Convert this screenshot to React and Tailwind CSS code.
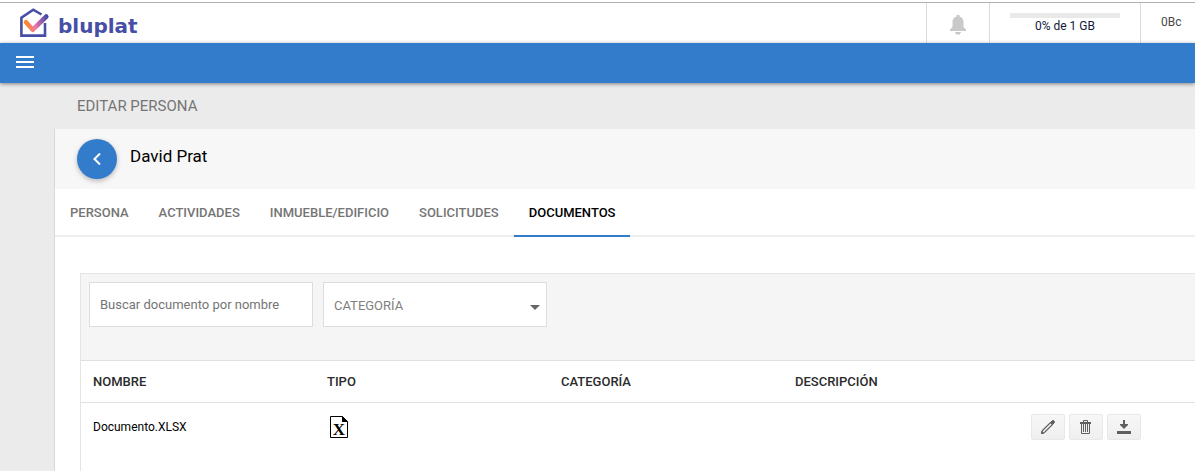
import { useState } from "react"

const TABS = ["PERSONA", "ACTIVIDADES", "INMUEBLE/EDIFICIO", "SOLICITUDES", "DOCUMENTOS"]
const COLUMNS = ["NOMBRE", "TIPO", "CATEGORÍA", "DESCRIPCIÓN"]
const DOCUMENTS = [{ name: "Documento.XLSX", category: "", description: "" }]

function Logo() {
  return (
    <a href="#" className="flex items-center gap-2 pl-5 text-[#464fa5]">
      <svg width="30" height="30" viewBox="0 0 30 30" fill="none" aria-hidden="true">
        <defs>
          <linearGradient id="check" gradientUnits="userSpaceOnUse" x1="5" y1="13" x2="27" y2="9">
            <stop offset="0" stopColor="#ff8a1f" />
            <stop offset="0.4" stopColor="#f07aa5" />
            <stop offset="0.7" stopColor="#a05cad" />
            <stop offset="1" stopColor="#3f4ca3" />
          </linearGradient>
        </defs>
        <path d="M21.500 6.500L13.300 1.700L1.400 9.800V27.600H25V15" stroke="#464fa5" strokeWidth="2.600" />
        <path d="M6 14.300L12.800 21.700L26.300 8.500" stroke="url(#check)" strokeWidth="4.600" strokeLinecap="round" strokeLinejoin="round" />
      </svg>
      <span className="pt-1.5 font-['DejaVu_Sans',sans-serif] text-[20px] leading-6 font-bold">bluplat</span>
    </a>
  )
}

function BellIcon() {
  return (
    <svg width="18" height="20" viewBox="0 0 18 20" fill="#c9c9c9" aria-hidden="true">
      <path d="M7.500 0h3v1.500c2.500.8 4 2.700 4 5.200v5.300l2.500 2.500V16H1v-1.500l2.500-2.500V6.700c0-2.500 1.500-4.400 4-5.200zM6 17h6v1h-1v1.500H7V18H6z" />
    </svg>
  )
}

function ExcelIcon() {
  return (
    <svg width="20" height="22" viewBox="0 0 20 22" role="img" aria-label="Excel">
      <path d="M1.500 .5H13.500L18.500 5.500V21.500H1.500Z" fill="#fff" stroke="#000" />
      <path d="M13 0L19 6H13Z" />
      <text x="10" y="19" textAnchor="middle" className="font-['Liberation_Serif',serif] text-[17px] font-bold">X</text>
    </svg>
  )
}

function PencilIcon() {
  return (
    <svg width="14" height="14" viewBox="0 0 14 14" fill="none" stroke="#5f5f5f" aria-hidden="true">
      <path d="M1.500 10.500L9.500 2.500L11.500 4.500L3.500 12.500L1 13Z" strokeWidth="1.200" />
      <path d="M9.500 2.500L11.500 .5H12.500L13.500 1.500V2.500L11.500 4.500ZM.5 13.500V11.500L2.500 13.500Z" fill="#5f5f5f" />
    </svg>
  )
}

function TrashIcon() {
  return (
    <svg width="12" height="14" viewBox="0 0 12 14" fill="none" stroke="#5f5f5f" aria-hidden="true">
      <path d="M3.500 2V.5H7.500V2M1.500 3.500V13.500H9.500V3.500" />
      <path d="M0 3H11" strokeWidth="2" />
      <path d="M3.500 4V12M5.500 4V12M7.500 4V12" />
    </svg>
  )
}

function DownloadIcon() {
  return (
    <svg width="14" height="14" viewBox="0 0 14 14" fill="#5f5f5f" aria-hidden="true">
      <path d="M6 0H8V4H11V5L7 9L3 5V4H6ZM0 11H14V14H0Z" />
    </svg>
  )
}

function ActionButton({ label, children }) {
  return (
    <button
      aria-label={label}
      className="flex h-[26px] w-[34px] items-center justify-center rounded-xs border border-[#e8e8e8] bg-linear-to-b from-[#f7f7f7] to-[#efefef]"
    >
      {children}
    </button>
  )
}

export default function App() {
  const [tab, setTab] = useState("DOCUMENTOS")
  const [search, setSearch] = useState("")

  const visible = DOCUMENTS.filter(d => d.name.toLowerCase().includes(search.toLowerCase()))

  return (
    <div className="flex min-h-screen flex-col bg-[#ebebeb] font-[Roboto,sans-serif] text-[13px] text-black">
      <header className="flex h-[43px] bg-white pt-0.5">
        <div className="flex flex-1 border-t border-[#b0b0b0]">
          <div className="flex flex-1 items-center">
            <Logo />
          </div>
          <button aria-label="Notificaciones" className="flex w-[63px] items-center justify-center border-l border-[#d8dcdc] pt-1">
            <BellIcon />
          </button>
          <div className="w-[151px] border-l border-[#d8dcdc] px-5 pt-2.5 text-center text-[12px] leading-4 text-[#101a3a]">
            <div className="h-[5px] bg-[#e9e9e9]" />
            0% de 1 GB
          </div>
          <div className="w-[55px] border-l border-[#d8dcdc] pt-[11px] pl-5 text-[12px] leading-4 text-[#4a4a4a]">0Bc</div>
        </div>
      </header>

      <nav className="relative flex h-10 items-center bg-[#337ccc] pb-0.5 pl-4 shadow-[0_1px_4px_rgba(0,0,0,0.45)]">
        <button aria-label="Menú" className="flex flex-col gap-[3px]">
          <span className="h-0.5 w-[18px] bg-white" />
          <span className="h-0.5 w-[18px] bg-white" />
          <span className="h-0.5 w-[18px] bg-white" />
        </button>
      </nav>

      <main className="flex flex-1 flex-col pl-[54px]">
        <h1 className="pt-[13px] pb-[13px] pl-[23px] text-[15px] leading-5 text-[#757575]">EDITAR PERSONA</h1>

        <section className="flex flex-1 flex-col border-l border-[#d9d9d9] bg-white">
          <div className="flex h-[60px] items-center gap-[13px] bg-[#f7f7f7] pl-[22px]">
            <button aria-label="Volver" className="flex size-10 items-center justify-center rounded-full bg-[#337ccc] shadow-[0_2px_5px_rgba(0,0,0,0.26)]">
              <svg width="8" height="12" viewBox="0 0 8 12" fill="none" stroke="#fff" strokeWidth="2" aria-hidden="true">
                <path d="M7 .5L1.500 6L7 11.500" />
              </svg>
            </button>
            <h2 className="pb-1.5 text-[17px] leading-6">David Prat</h2>
          </div>

          <div role="tablist" className="flex h-12 border-b-2 border-[#eeeeee]">
            {TABS.map(t => (
              <button
                key={t}
                role="tab"
                aria-selected={t === tab}
                onClick={() => setTab(t)}
                className={`-mb-0.5 border-b-2 px-[15px] pt-0.5 font-medium ${t === tab ? "border-[#337ccc] text-black" : "border-transparent text-[#757575]"}`}
              >
                {t}
              </button>
            ))}
          </div>

          <div className="mt-9 ml-[25px] flex-1 border-t border-l border-[#e4e4e4]">
            <div className="flex h-[86px] gap-2.5 bg-[#f5f5f5] p-2">
              <input
                value={search}
                onChange={e => setSearch(e.target.value)}
                aria-label="Buscar documento por nombre"
                placeholder="Buscar documento por nombre"
                className="h-[45px] w-56 border border-[#dddddd] bg-white px-2.5 outline-none placeholder:text-[#757575]"
              />
              <div className="relative h-[45px] w-56">
                <select aria-label="Categoría" className="size-full appearance-none border border-[#dddddd] bg-white px-2.5 pt-0.5 text-[#808080] outline-none">
                  <option>CATEGORÍA</option>
                </select>
                <svg className="pointer-events-none absolute top-[23px] right-[7px]" width="10" height="5" viewBox="0 0 10 5" fill="#666" aria-hidden="true">
                  <path d="M0 0H10L5 5Z" />
                </svg>
              </div>
            </div>

            <table className="w-full table-fixed text-left">
              <thead>
                <tr className="h-[42px] border-y border-[#e0e0e0] text-[#2b2b2b]">
                  {COLUMNS.map(c => (
                    <th key={c} className="w-[234px] pl-3 font-medium">{c}</th>
                  ))}
                  <th aria-label="Acciones" />
                </tr>
              </thead>
              <tbody>
                {visible.map(d => (
                  <tr key={d.name} className="h-12">
                    <td className="pl-3 text-[12px]">{d.name}</td>
                    <td className="pl-3.5"><ExcelIcon /></td>
                    <td className="pl-3">{d.category}</td>
                    <td className="pl-3">{d.description}</td>
                    <td className="pl-3.5">
                      <div className="flex gap-1">
                        <ActionButton label="Editar"><PencilIcon /></ActionButton>
                        <ActionButton label="Eliminar"><TrashIcon /></ActionButton>
                        <ActionButton label="Descargar"><DownloadIcon /></ActionButton>
                      </div>
                    </td>
                  </tr>
                ))}
              </tbody>
            </table>
          </div>
        </section>
      </main>
    </div>
  )
}
